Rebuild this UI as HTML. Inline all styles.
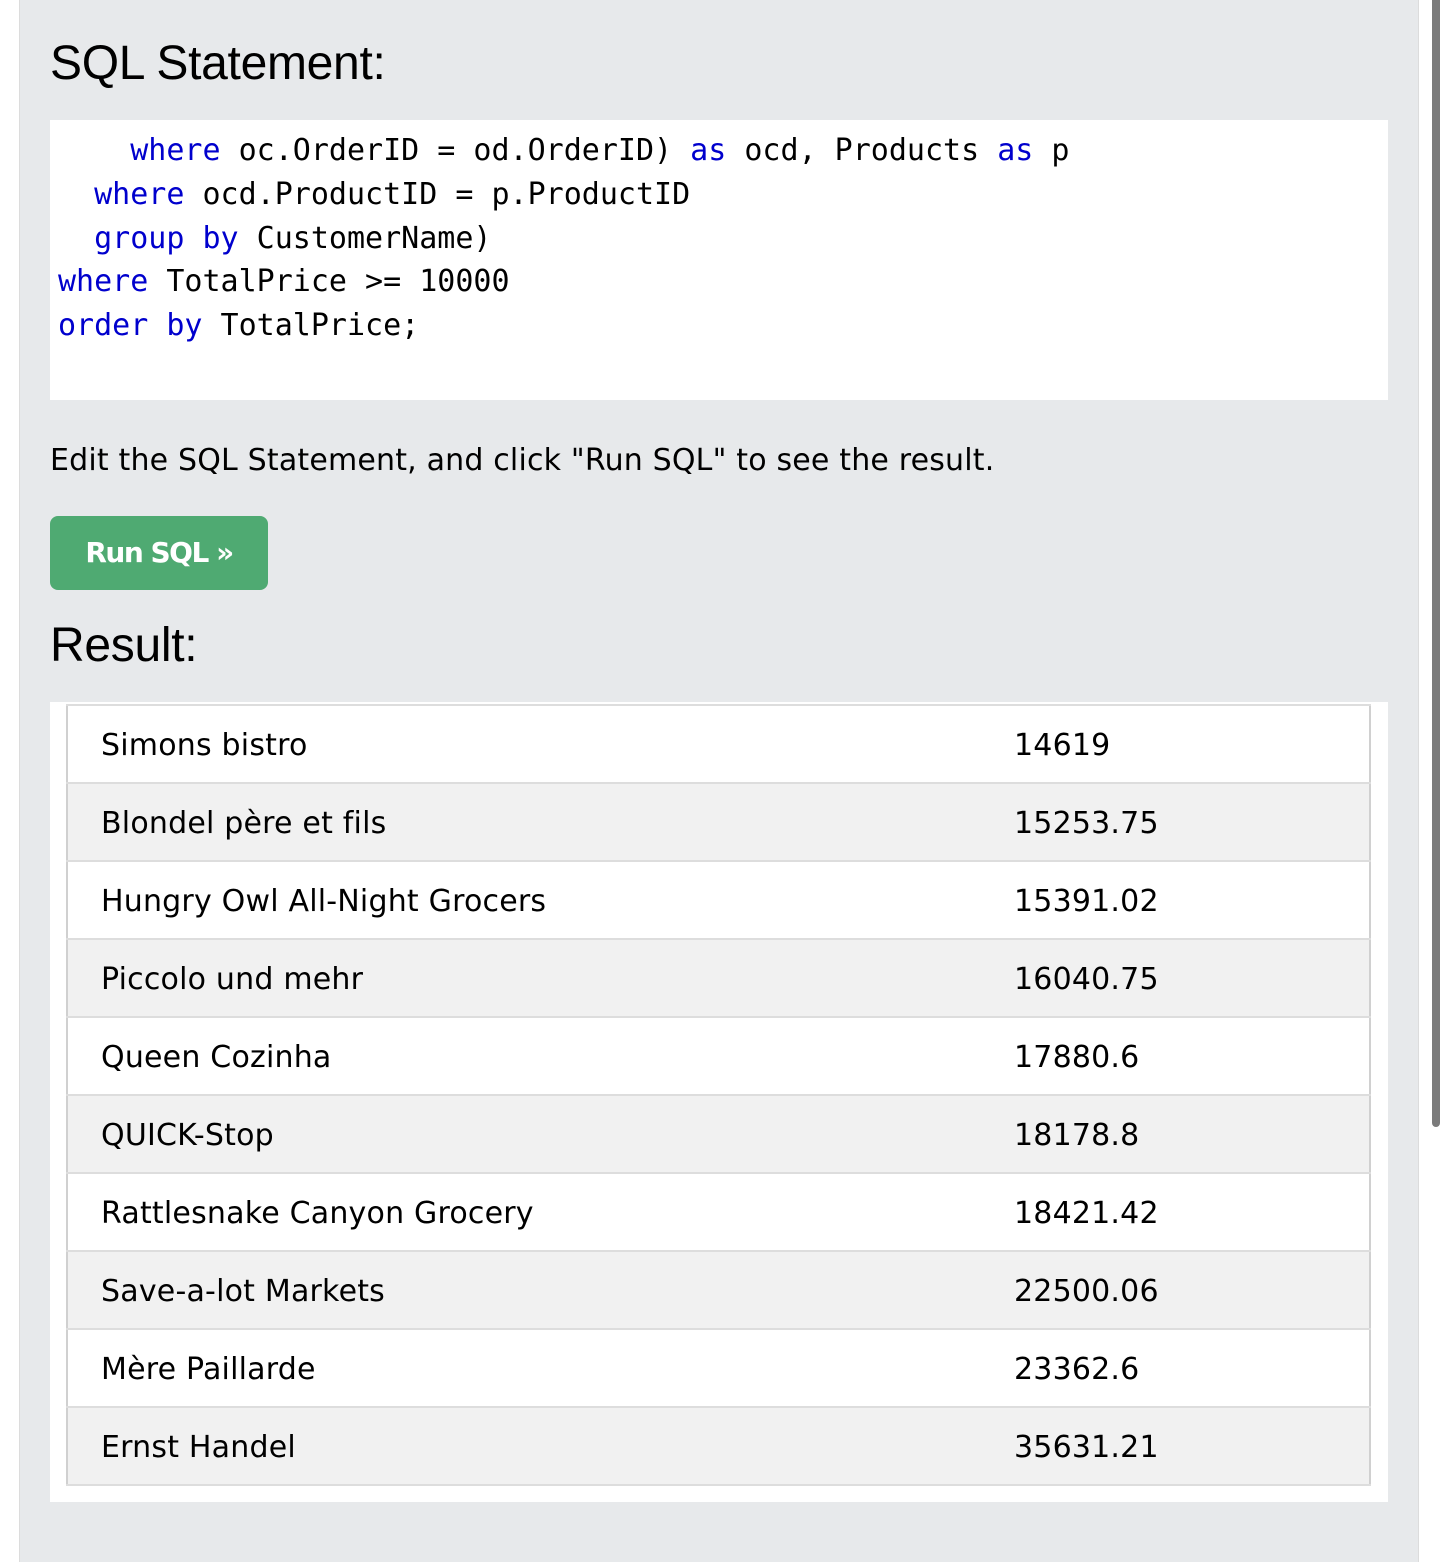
<!DOCTYPE html>
<html><head><meta charset="utf-8"><style>
html,body{margin:0;padding:0;width:1440px;height:1562px;overflow:hidden;background:#fff;}
.panel{position:absolute;left:19px;top:0;width:1400px;height:1562px;background:#e7e9eb;border-left:1px solid #dcdcdc;border-right:1px solid #dcdcdc;box-sizing:border-box;}
.sb{position:absolute;left:1432px;top:0;width:8px;height:1127px;background:#7b7b7b;border-radius:0 0 6px 6px;}
h2{position:absolute;margin:0;font:48px "Liberation Sans",sans-serif;color:#000;left:50px;letter-spacing:-0.3px;}
.code{position:absolute;left:50px;top:120px;width:1338px;height:280px;background:#fff;overflow:hidden;font:30px "DejaVu Sans Mono","Liberation Mono",monospace;color:#000;}
.code div{position:absolute;left:8px;white-space:pre;line-height:44px;}
.k{color:#0000cd;}
p{position:absolute;margin:0;left:50px;top:443px;font:30px "DejaVu Sans",sans-serif;color:#000;letter-spacing:0.18px;}
.btn{position:absolute;left:50px;top:516px;width:218px;height:74px;background:#4faa72;border-radius:8px;color:#fff;font:bold 28px "DejaVu Sans",sans-serif;text-align:center;line-height:74px;letter-spacing:-1.5px;}
.res{position:absolute;left:50px;top:702px;width:1338px;height:800px;background:#fff;}
table{position:absolute;left:16px;top:2px;width:1305px;border-collapse:collapse;font:30px "DejaVu Sans",sans-serif;color:#000;border-left:2px solid #d0d0d0;border-right:2px solid #d0d0d0;}
td{height:73px;border-top:2px solid #dddddd;border-bottom:2px solid #dddddd;padding:3px 0 0 33px;letter-spacing:0.2px;}
tr:nth-child(even) td{background:#f1f1f1;}
td:first-child{width:880px;}
</style></head><body>
<div class="panel"></div>
<div class="sb"></div>
<h2 style="top:36px">SQL Statement:</h2>
<div class="code">
<div style="top:9px">    <span class="k">where</span> oc.OrderID = od.OrderID) <span class="k">as</span> ocd, Products <span class="k">as</span> p</div>
<div style="top:53px">  <span class="k">where</span> ocd.ProductID = p.ProductID</div>
<div style="top:97px">  <span class="k">group by</span> CustomerName)</div>
<div style="top:140px"><span class="k">where</span> TotalPrice &gt;= 10000</div>
<div style="top:184px"><span class="k">order by</span> TotalPrice;</div>
</div>
<p>Edit the SQL Statement, and click "Run SQL" to see the result.</p>
<div class="btn">Run SQL »</div>
<h2 style="top:618px">Result:</h2>
<div class="res"><table>
<tr><td>Simons bistro</td><td>14619</td></tr>
<tr><td>Blondel père et fils</td><td>15253.75</td></tr>
<tr><td>Hungry Owl All-Night Grocers</td><td>15391.02</td></tr>
<tr><td>Piccolo und mehr</td><td>16040.75</td></tr>
<tr><td>Queen Cozinha</td><td>17880.6</td></tr>
<tr><td>QUICK-Stop</td><td>18178.8</td></tr>
<tr><td>Rattlesnake Canyon Grocery</td><td>18421.42</td></tr>
<tr><td>Save-a-lot Markets</td><td>22500.06</td></tr>
<tr><td>Mère Paillarde</td><td>23362.6</td></tr>
<tr><td>Ernst Handel</td><td>35631.21</td></tr>
</table></div>
</body></html>
